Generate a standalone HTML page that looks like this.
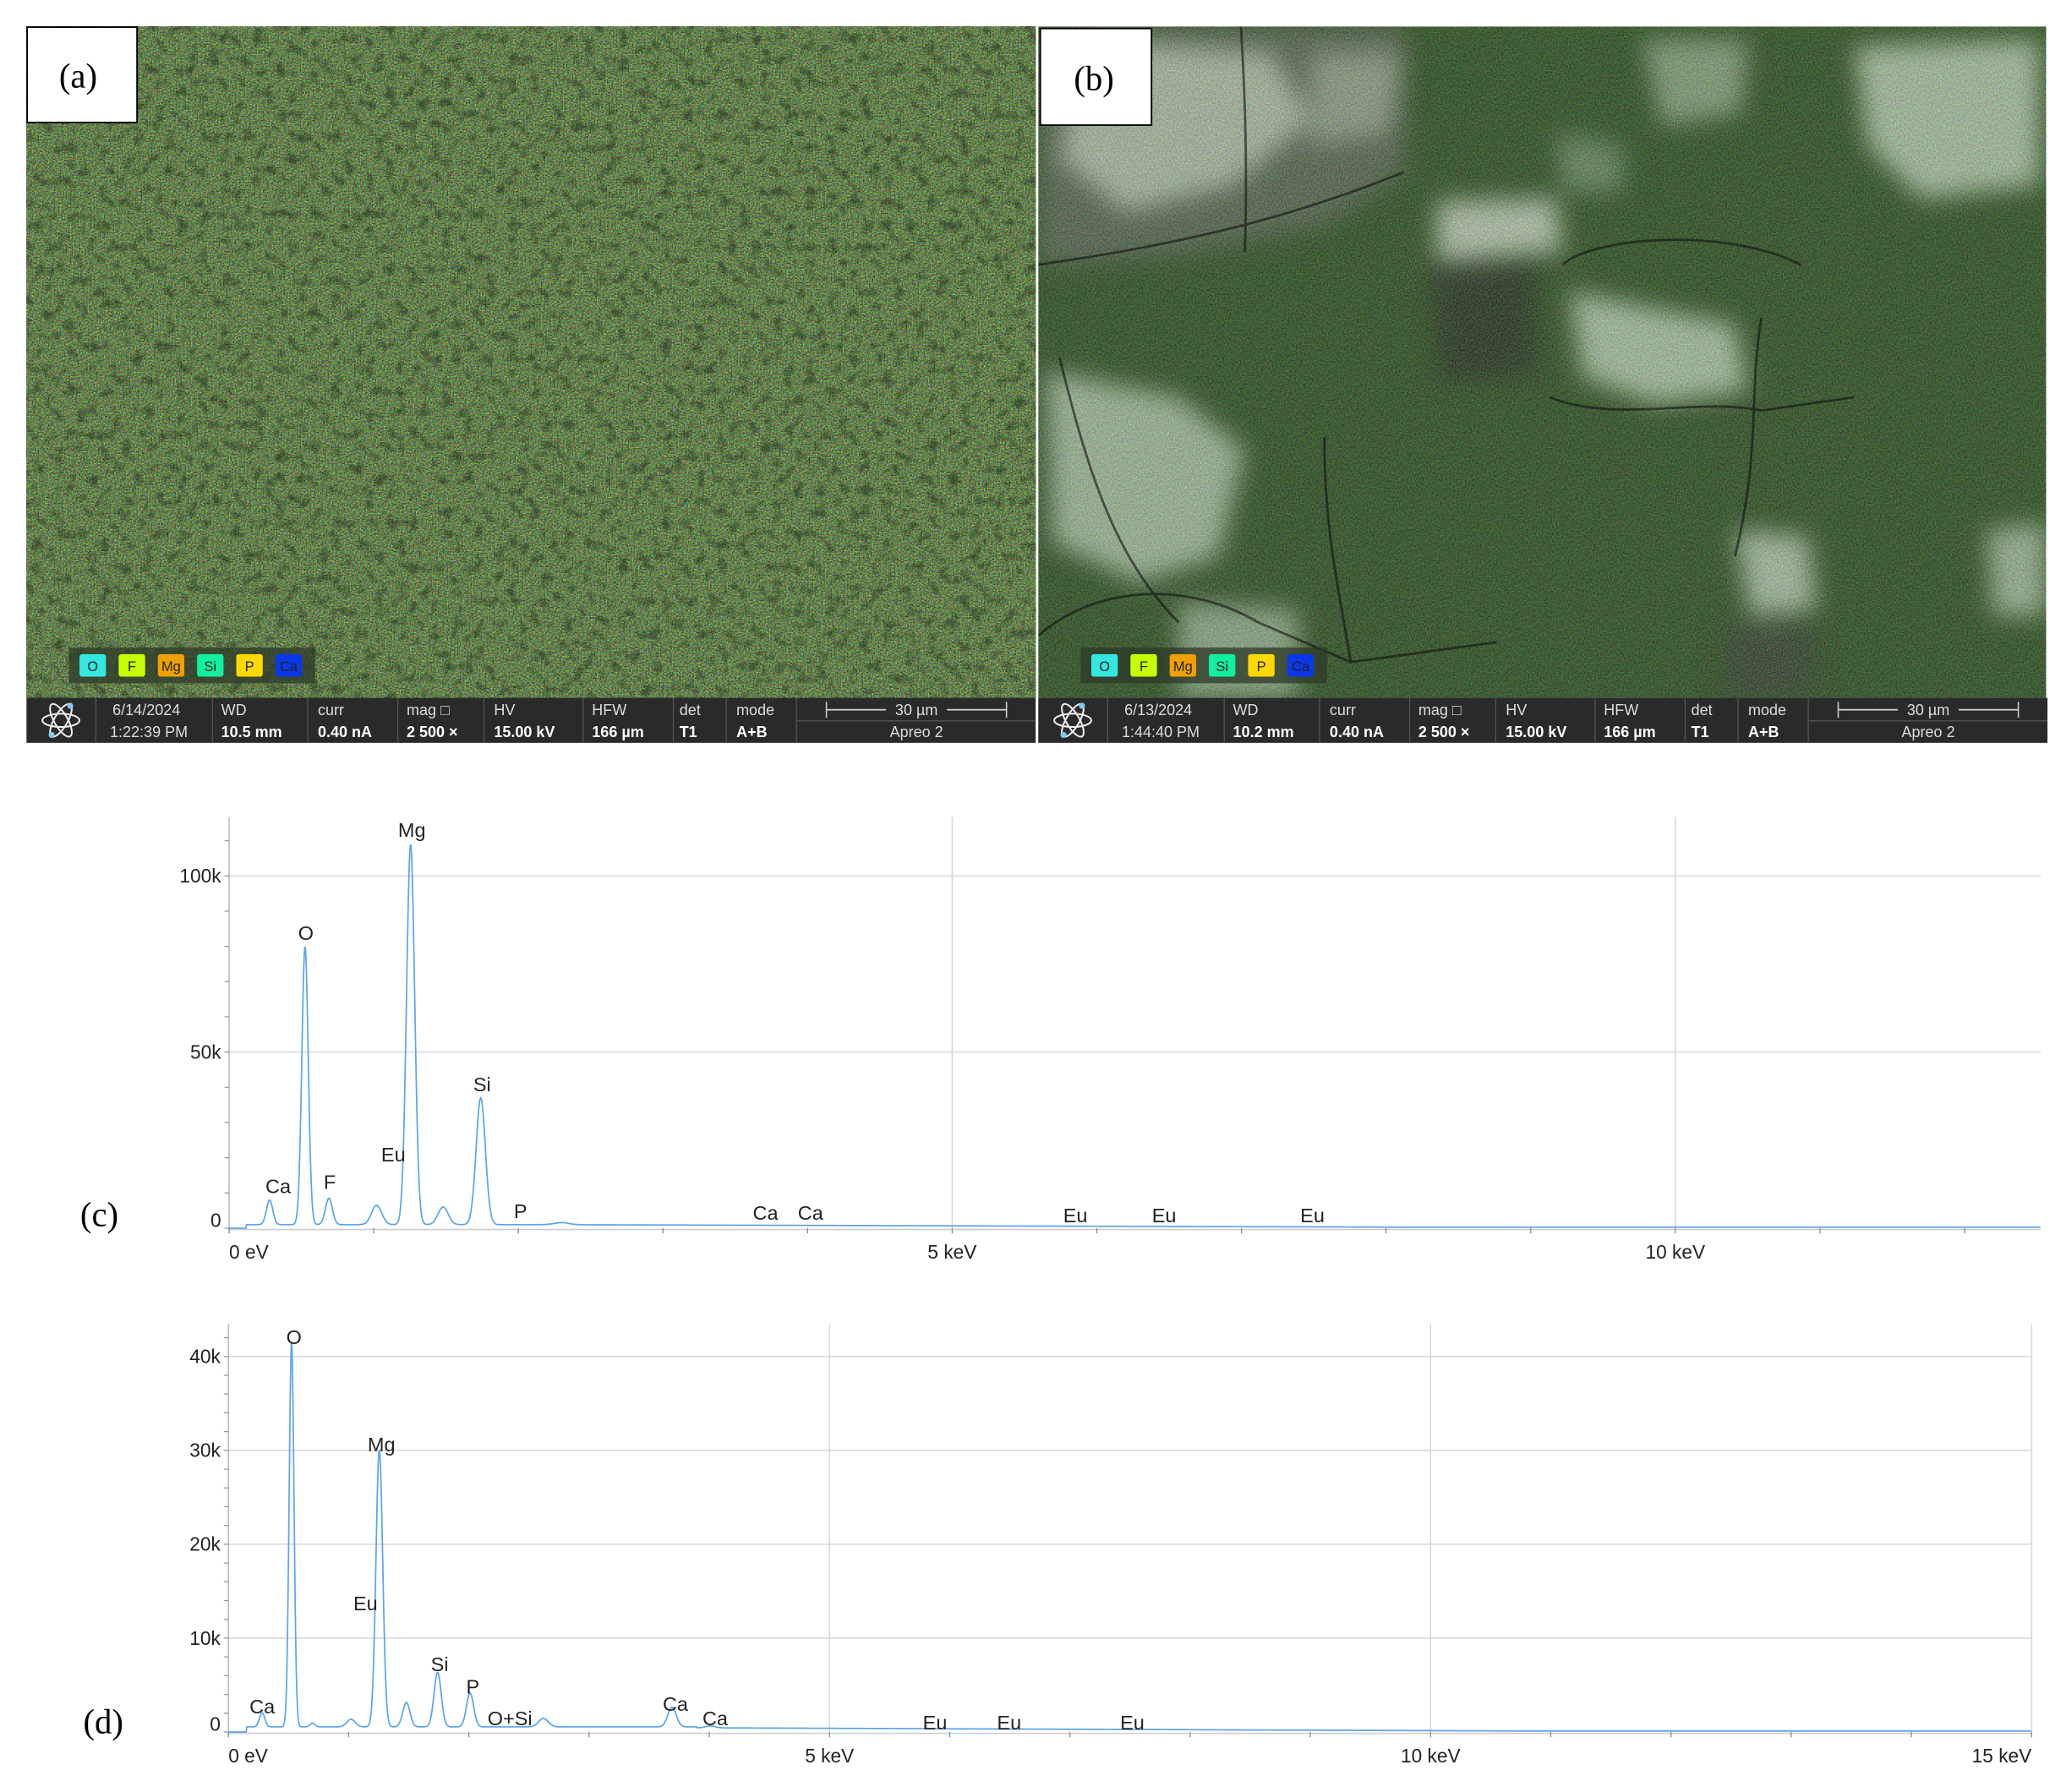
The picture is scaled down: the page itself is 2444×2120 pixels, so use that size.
<!DOCTYPE html>
<html><head><meta charset="utf-8"><style>
html,body{margin:0;padding:0;background:#fff;}
svg{display:block}
text{font-family:"Liberation Sans",sans-serif}
filter{color-interpolation-filters:sRGB}
</style></head><body>
<svg id="s" width="2444" height="2120" viewBox="0 0 1560 1353.3" preserveAspectRatio="none" xmlns="http://www.w3.org/2000/svg">
<defs>
<filter id="na" x="0" y="0" width="1" height="1" color-interpolation-filters="sRGB">
<feTurbulence type="fractalNoise" baseFrequency="0.9" numOctaves="2" seed="3" result="t"/>
<feColorMatrix in="t" type="matrix" values="1.3 0 0 0 -0.25  0 1.3 0 0 -0.14  0 0 1.3 0 -0.34  0 0 0 0 1"/>
</filter>
<filter id="nb" x="0" y="0" width="1" height="1" color-interpolation-filters="sRGB">
<feTurbulence type="fractalNoise" baseFrequency="0.9" numOctaves="2" seed="5" result="t"/>
<feColorMatrix in="t" type="matrix" values="1.2 0 0 0 -0.34  0 1.2 0 0 -0.22  0 0 1.2 0 -0.38  0 0 0 0 1"/>
</filter>
<filter id="spots" x="0" y="0" width="1" height="1" color-interpolation-filters="sRGB">
<feTurbulence type="fractalNoise" baseFrequency="0.12" numOctaves="2" seed="7" result="t"/>
<feColorMatrix in="t" type="matrix" values="0 0 0 0 0.08  0 0 0 0 0.12  0 0 0 0 0.08  -3.2 0 0 0 1.6"/>
</filter>
<filter id="bl" color-interpolation-filters="sRGB"><feGaussianBlur stdDeviation="9"/></filter>
<clipPath id="cb"><rect x="784" y="20" width="761" height="507"/></clipPath>
</defs>
<rect x="20" y="20" width="762" height="507" fill="#62784c"/>
<rect x="20" y="20" width="762" height="507" filter="url(#na)" opacity="0.85"/>
<rect x="20" y="20" width="762" height="507" filter="url(#spots)" opacity="0.45"/>
<g clip-path="url(#cb)">
<rect x="784" y="20" width="761" height="507" fill="#405a36"/>
<g filter="url(#bl)" opacity="0.95">
<path d="M784 20 L1060 20 L1060 130 L1000 170 L900 190 L800 200 L784 200Z" fill="#767674"/>
<path d="M820 30 L960 40 L990 90 L930 140 L850 160 L800 120Z" fill="#e6e6e2"/>
<path d="M990 40 L1060 40 L1050 100 L990 110Z" fill="#c0c0bc"/>
<path d="M1085 152 L1175 150 L1180 190 L1085 198Z" fill="#f2f4ee"/>
<path d="M1080 198 L1160 198 L1160 285 L1085 288Z" fill="#363634"/>
<path d="M1185 220 L1310 245 L1320 295 L1250 305 L1195 285Z" fill="#e0eede"/>
<path d="M1400 35 L1540 30 L1540 140 L1450 150 L1410 110Z" fill="#e2eedf"/>
<path d="M1240 30 L1320 30 L1315 85 L1255 95Z" fill="#aec2ac"/>
<path d="M790 280 L890 300 L940 340 L920 420 L860 440 L795 410Z" fill="#d6e4d4"/>
<path d="M1310 400 L1365 405 L1372 460 L1322 465Z" fill="#e2ece0"/>
<path d="M1300 470 L1370 470 L1370 527 L1300 527Z" fill="#4a4a48"/>
<path d="M1500 400 L1545 395 L1545 465 L1505 465Z" fill="#d0dece"/>
<path d="M890 455 L980 460 L980 527 L890 527Z" fill="#bccfbc"/>
<path d="M1175 100 L1225 110 L1225 145 L1180 145Z" fill="#8aa288"/>
</g>
<rect x="784" y="20" width="761" height="507" filter="url(#nb)" opacity="0.4"/>
<g fill="none" stroke="#111" stroke-width="1.8" opacity="0.6">
<path d="M937 20 C940 70 942 120 940 190"/>
<path d="M784 200 C850 190 950 175 1060 130"/>
<path d="M784 480 C830 440 900 440 950 470 L1020 500 L1130 485"/>
<path d="M1330 240 C1320 300 1330 340 1310 420"/>
<path d="M1170 300 C1220 320 1280 300 1330 310 L1400 300"/>
<path d="M800 270 C820 350 840 420 890 470"/>
<path d="M1000 330 C1000 400 1010 440 1020 500"/>
<path d="M1180 200 C1200 180 1300 170 1360 200"/>
</g>
</g>
<rect x="20.5" y="20.5" width="83" height="72" fill="#fff" stroke="#000" stroke-width="1.2"/>
<text x="59" y="66" font-size="26" text-anchor="middle" style="font-family:'Liberation Serif',serif">(a)</text>
<rect x="785.5" y="21.5" width="84" height="73" fill="#fff" stroke="#000" stroke-width="1.2"/>
<text x="826" y="68" font-size="26" text-anchor="middle" style="font-family:'Liberation Serif',serif">(b)</text>
<g id="bars"></g>
<g id="plots"></g>
<text x="75" y="926" font-size="26" text-anchor="middle" style="font-family:'Liberation Serif',serif">(c)</text>
<text x="78" y="1309" font-size="26" text-anchor="middle" style="font-family:'Liberation Serif',serif">(d)</text>
</svg>
<script>
var NS="http://www.w3.org/2000/svg";
function el(p,t,a,txt){var e=document.createElementNS(NS,t);for(var k in a)e.setAttribute(k,a[k]);if(txt!=null)e.textContent=txt;p.appendChild(e);return e;}
var bars=document.getElementById('bars');
function bar(ox,date,time,wd){
 var g=el(bars,'g',{transform:'translate('+ox+',0)'});
 el(g,'rect',{x:52,y:489,width:186,height:27,fill:'#2e3a28',opacity:0.75});
 var ch=[['O','#33e8e0'],['F','#c8ff00'],['Mg','#f0a000'],['Si','#10f0a0'],['P','#ffd800'],['Ca','#0838e8']];
 ch.forEach(function(c,i){var x=60+i*29.6;el(g,'rect',{x:x,y:494,width:20,height:17,rx:2,fill:c[1]});
  el(g,'text',{x:x+10,y:507,'font-size':10.5,'text-anchor':'middle',fill:'#222'},c[0]);});
 el(g,'rect',{x:20,y:527,width:762,height:34,fill:'#2a2a2a'});
 var seps=[72,160,232,300,365,440,508,548,601];
 seps.forEach(function(x){el(g,'rect',{x:x,y:527,width:0.8,height:34,fill:'#555'});});
 el(g,'rect',{x:601,y:544,width:181,height:0.8,fill:'#555'});
 var cols=[[85,date,time],[167,'WD',wd],[240,'curr','0.40 nA'],[307,'mag  \u25A1','2 500 \u00D7'],[373,'HV','15.00 kV'],[447,'HFW','166 \u00B5m'],[513,'det','T1'],[556,'mode','A+B']];
 cols.forEach(function(c,i){el(g,'text',{x:c[0],y:540,'font-size':11.5,fill:'#ddd'},c[1]);
  el(g,'text',{x:c[0]-(i==0?2:0),y:556.5,'font-size':11.5,fill:i==0?'#ddd':'#fff','font-weight':i==0?'normal':'bold'},c[2]);});
 el(g,'line',{x1:624,y1:536,x2:760,y2:536,stroke:'#ccc','stroke-width':1.2});
 el(g,'line',{x1:624,y1:530,x2:624,y2:542,stroke:'#ccc'});el(g,'line',{x1:760,y1:530,x2:760,y2:542,stroke:'#ccc'});
 el(g,'rect',{x:669,y:530,width:46,height:12,fill:'#2a2a2a'});
 el(g,'text',{x:692,y:540,'font-size':11.5,'text-anchor':'middle',fill:'#ddd'},'30 \u00B5m');
 el(g,'text',{x:692,y:556.5,'font-size':11.5,'text-anchor':'middle',fill:'#ddd'},'Apreo 2');
 var a=el(g,'g',{transform:'translate(46,544)',fill:'none',stroke:'#eee','stroke-width':1.3});
 el(a,'ellipse',{rx:14,ry:5});el(a,'ellipse',{rx:14,ry:5,transform:'rotate(60)'});el(a,'ellipse',{rx:14,ry:5,transform:'rotate(-60)'});
 el(g,'circle',{cx:53,cy:533,r:2.3,fill:'#7ec8f0'});el(g,'circle',{cx:39,cy:555,r:2.3,fill:'#7ec8f0'});
}
bar(0,'6/14/2024','1:22:39 PM','10.5 mm');
bar(764,'6/13/2024','1:44:40 PM','10.2 mm');

var P=document.getElementById('plots');
function gauss(e,c,s){var d=(e-c)/s;return Math.exp(-0.5*d*d);}
function plot(o){
 var X=function(e){return o.x0+o.kx*e;},Y=function(v){return o.y0-o.ky*v;};
 o.grid.forEach(function(v){el(P,'line',{x1:o.x0,y1:Y(v),x2:o.xr,y2:Y(v),stroke:'#d8d8d8','stroke-width':1});});
 o.vg.forEach(function(e){el(P,'line',{x1:X(e),y1:o.top,x2:X(e),y2:o.y0,stroke:'#d8d8d8','stroke-width':1});});
 el(P,'line',{x1:o.x0,y1:o.top,x2:o.x0,y2:o.y0+2,stroke:'#bbb','stroke-width':1});
 el(P,'line',{x1:o.x0,y1:o.y0+1,x2:o.xr,y2:o.y0+1,stroke:'#ccc','stroke-width':1});
 for(var v=0;Y(v)>o.top;v+=o.minor){el(P,'line',{x1:o.x0-3.5,y1:Y(v),x2:o.x0,y2:Y(v),stroke:'#999','stroke-width':0.8});}
 for(var e=0;X(e)<=o.xr+1;e+=1){el(P,'line',{x1:X(e),y1:o.y0,x2:X(e),y2:o.y0+4,stroke:'#888','stroke-width':0.8});}
 o.ylab.forEach(function(l){el(P,'text',{x:o.x0-6,y:Y(l[0])+5+(l[2]||0),'font-size':14.5,'text-anchor':'end',fill:'#222'},l[1]);});
 o.xlab.forEach(function(l){el(P,'text',{x:X(l[0])+(l[2]||0),y:o.y0+23,'font-size':14.5,'text-anchor':l[3]||'middle',fill:'#222'},l[1]);});
 var d='';var emax=(o.xr-o.x0)/o.kx;
 for(var e=0.0;e<=emax;e+=0.004){
  var v=o.bg(e);o.peaks.forEach(function(p){v+=p[1]*gauss(e,p[0],p[2]);});
  var x=X(e),y=Y(v);d+=(d?'L':'M')+x.toFixed(2)+' '+y.toFixed(2);}
 el(P,'path',{d:d,fill:'none',stroke:'#5aa5ec','stroke-width':1.1});
 o.labels.forEach(function(l){el(P,'text',{x:l[1],y:l[2]+4,'font-size':15,'text-anchor':'middle',fill:'#222'},l[0]);});
}
plot({x0:173,kx:109.2,y0:927.5,ky:2.66,xr:1541,top:617,grid:[50,100],vg:[5,10],minor:10,
 ylab:[[0,'0',-6],[50,'50k'],[100,'100k']],xlab:[[0,'0 eV',0,'start'],[5,'5 keV'],[10,'10 keV']],
 bg:function(e){return e<0.12?0:(e<2.2?1.0:Math.max(0.3,1.0-(e-2.2)*0.12));},
 peaks:[[0.28,7,0.022],[0.525,79,0.022],[0.69,7.5,0.024],[1.02,5.5,0.035],[1.255,108,0.028],[1.48,5,0.035],[1.74,36,0.032],[2.3,0.6,0.05]],
 labels:[['Mg',311,628],['O',231,706],['Si',364,820],['Eu',297,873],['Ca',210,897],['F',249,894],['P',393,916],['Ca',578,917],['Ca',612,917],['Eu',812,919],['Eu',879,919],['Eu',991,919]]});
plot({x0:172.5,kx:90.77,y0:1308,ky:7.09,xr:1534,top:1000,grid:[10,20,30,40],vg:[5,10,15],minor:2,
 ylab:[[0,'0',-6],[10,'10k'],[20,'20k'],[30,'30k'],[40,'40k']],xlab:[[0,'0 eV',0,'start'],[5,'5 keV'],[10,'10 keV'],[15,'15 keV',0,'end']],
 bg:function(e){return e<0.15?0:(e<3.9?0.55:Math.max(0.1,0.45-(e-3.9)*0.05));},
 peaks:[[0.28,1.5,0.022],[0.525,41,0.02],[0.7,0.4,0.02],[1.02,0.8,0.035],[1.255,29.5,0.028],[1.48,2.6,0.03],[1.74,5.8,0.03],[2.01,3.6,0.03],[2.62,0.9,0.04],[3.69,2.1,0.035],[4.01,0.2,0.04]],
 labels:[['O',222,1011],['Mg',288,1092],['Eu',276,1212],['Si',332,1258],['P',357,1275],['Ca',198,1290],['O+Si',385,1299],['Ca',510,1288],['Ca',540,1299],['Eu',706,1302],['Eu',762,1302],['Eu',855,1302]]});
</script>
</body></html>
